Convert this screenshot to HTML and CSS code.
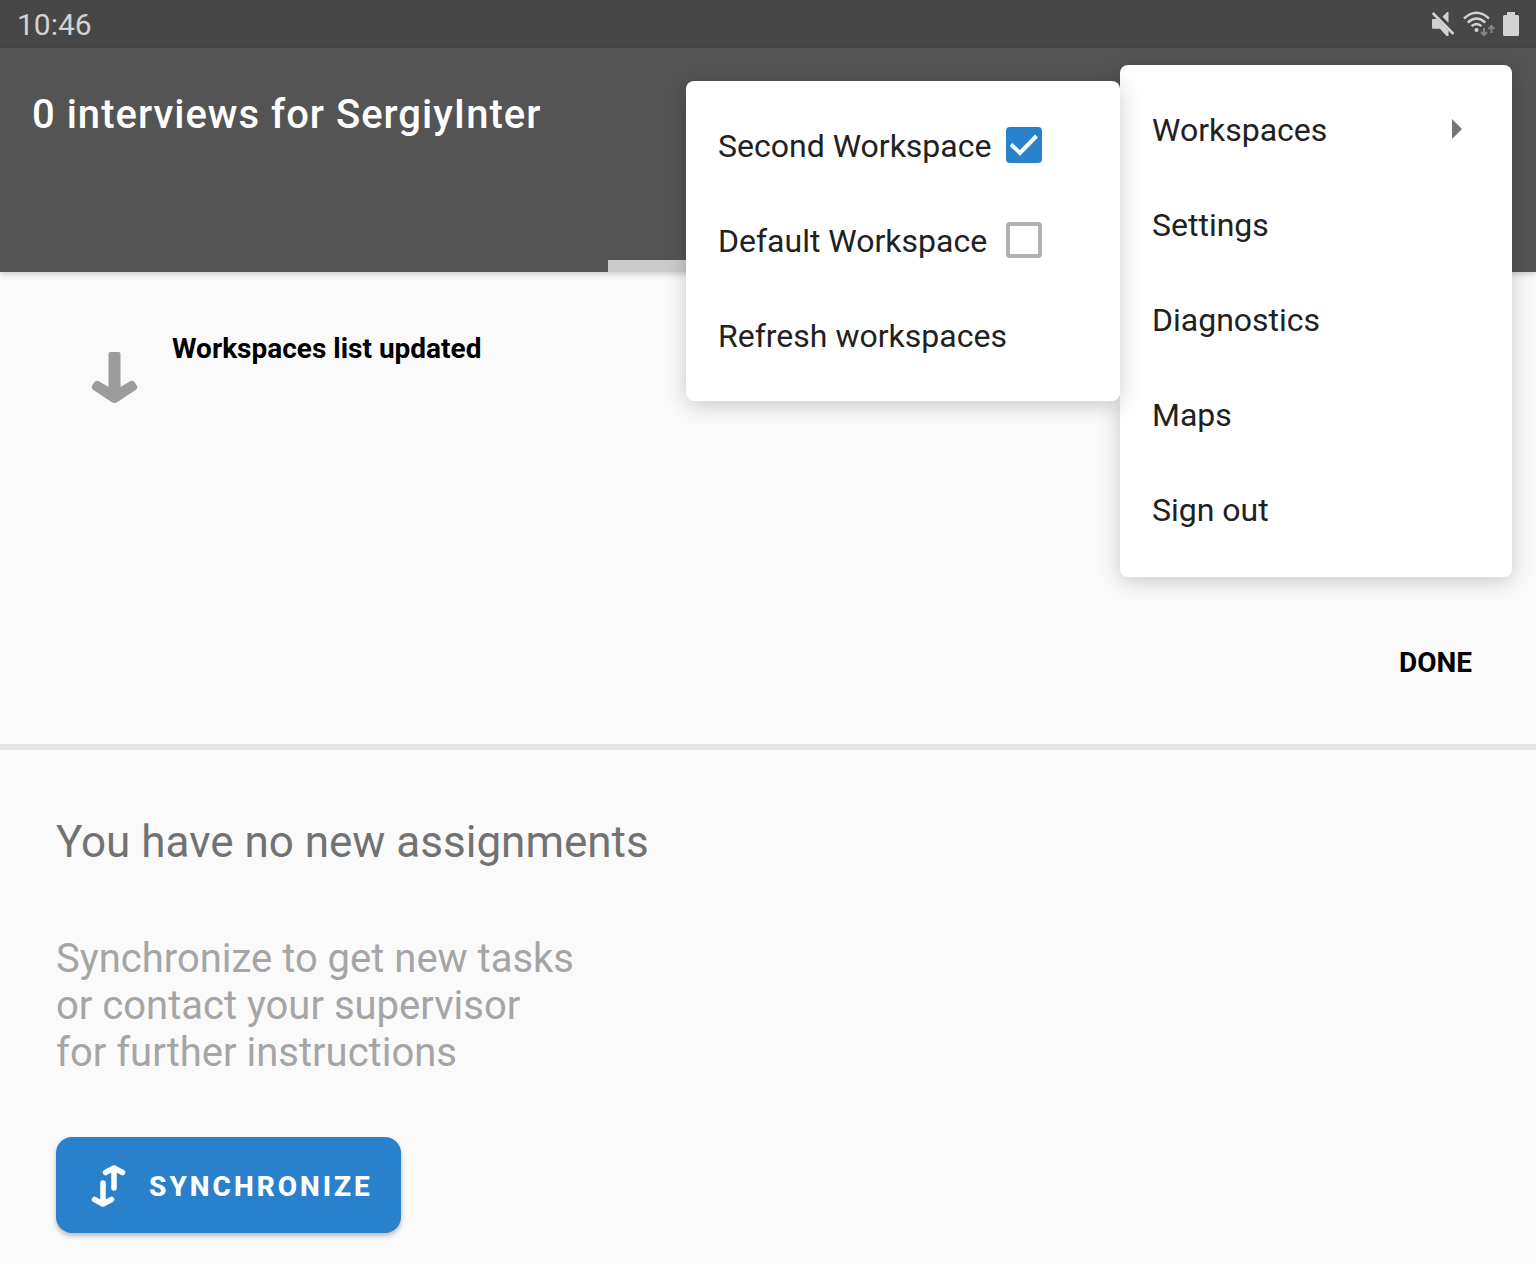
FILE: index.html
```html
<!DOCTYPE html>
<html lang="en">
<head>
<meta charset="utf-8">
<meta name="viewport" content="width=device-width, initial-scale=1">
<title>Interviews</title>
<link rel="stylesheet" href="styles.css">
</head>
<body>
<div class="status-bar">
  <time class="clock">10:46</time>
  <div class="status-icons">
    <svg class="icon-mute" width="24" height="26" viewBox="0 0 24 26" aria-hidden="true">
      <path d="M2 8h4L17.500 19.500V25h-2L9 17.700H2q-1 0-1-1V9q0-1 1-1z" fill="#d2d2d2"/>
      <path d="M11.500 5.800L16 1h1.500v11z" fill="#d2d2d2"/>
      <path d="M1.700 2L22.500 23" stroke="#d2d2d2" stroke-width="2.600"/>
    </svg>
    <svg class="icon-wifi" width="32" height="26" viewBox="0 0 32 26" aria-hidden="true">
      <g fill="none" stroke="#d2d2d2" stroke-width="2.400">
        <path d="M1 7.500Q13.500 -4 26 7.500"/>
        <path d="M4.700 11.500Q13.500 3.500 22.300 11.500"/>
        <path d="M8.500 15.200Q13.500 10.800 18.500 15.200"/>
      </g>
      <circle cx="13.500" cy="19" r="2" fill="#d2d2d2"/>
      <g fill="none" stroke="#858585" stroke-width="2">
        <path d="M21 17v7M18 21l3 3 3-3M28.500 22v-7M25.500 18l3-3 3 3"/>
      </g>
    </svg>
    <svg class="icon-battery" width="16" height="26" viewBox="0 0 16 26" aria-hidden="true">
      <path d="M4 1h8v3h2.500a1.500 1.500 0 0 1 1.500 1.500v18a1.500 1.500 0 0 1-1.500 1.500h-13A1.500 1.500 0 0 1 0 23.500V5.500a1.500 1.500 0 0 1 1.500-1.500H4z" fill="#d2d2d2"/>
    </svg>
  </div>
</div>

<header class="app-bar">
  <h1 class="app-title">0 interviews for SergiyInter</h1>
  <div class="tab-indicator"></div>
  <nav class="menu" aria-label="Options">
    <button class="menu-item" type="button" aria-expanded="true">Workspaces
      <svg width="10" height="20" viewBox="0 0 10 20" aria-hidden="true"><path d="M0 0l10 10L0 20z" fill="#757575"/></svg>
    </button>
    <button class="menu-item" type="button">Settings</button>
    <button class="menu-item" type="button">Diagnostics</button>
    <button class="menu-item" type="button">Maps</button>
    <button class="menu-item" type="button">Sign out</button>
    <div class="submenu">
      <label class="menu-item"><span class="menu-label">Second Workspace</span><input class="check" type="checkbox" checked></label>
      <label class="menu-item"><span class="menu-label">Default Workspace</span><input class="check" type="checkbox"></label>
      <button class="menu-item" type="button">Refresh workspaces</button>
    </div>
  </nav>
</header>

<main>
  <section class="sync-panel">
    <div class="sync-message">
      <svg width="48" height="54" viewBox="0 0 48 54" aria-hidden="true">
        <path d="M18.500 3q0-2 2-2h8q2 0 2 2v33l10-6q2-1 4 1l2 3q2 3-1 5L27.500 51q-3 2-6 0L3.500 39q-3-2-1-5l2-3q2-2 4-1l10 6z" fill="#9c9c9c"/>
      </svg>
      <h2 class="sync-title">Workspaces list updated</h2>
    </div>
    <button class="done" type="button">DONE</button>
  </section>
  <section class="empty">
    <h2 class="empty-title">You have no new assignments</h2>
    <p class="empty-text">Synchronize to get new tasks<br>or contact your supervisor<br>for further instructions</p>
    <button class="sync-button" type="button">
      <svg width="36" height="44" viewBox="0 0 36 44" aria-hidden="true">
        <g fill="none" stroke="#fff" stroke-width="5.500" stroke-linecap="round" stroke-linejoin="round">
          <path d="M23 24V4M14.500 8.500L23 4L31.500 8.500"/>
          <path d="M12 19V39M3.500 35.500L12 40L20.500 35.500"/>
        </g>
      </svg>
      <span>SYNCHRONIZE</span>
    </button>
  </section>
</main>
</body>
</html>
```

FILE: styles.css
```css
* {
  box-sizing: border-box;
}

body {
  margin: 0;
  min-height: 100vh;
  background: #fafafa;
  color: #000;
  font-family: Roboto, "Liberation Sans", sans-serif;
}

h1, h2, p {
  margin: 0;
}

button {
  border: 0;
  background: none;
  color: inherit;
  font: inherit;
  cursor: pointer;
}

svg {
  flex: none;
}

.status-bar {
  display: flex;
  align-items: center;
  justify-content: space-between;
  height: 48px;
  padding: 0 17px;
  background: #474747;
}

.clock {
  color: #d2d2d2;
  font-size: 30px;
  line-height: 48px;
  padding-top: 2px;
}

.status-icons {
  display: flex;
  gap: 8px;
}

.app-bar {
  position: relative;
  z-index: 1;
  display: flex;
  flex-direction: column;
  justify-content: space-between;
  height: 224px;
  padding: 43px 32px 0;
  background: #545454;
  box-shadow: 0 2px 6px rgba(0, 0, 0, 0.2);
}

.app-title {
  color: #fff;
  font-size: 40px;
  font-weight: 500;
  line-height: 48px;
  letter-spacing: 1px;
}

.tab-indicator {
  align-self: center;
  width: 320px;
  height: 12px;
  background: #cbcbcb;
}

.menu,
.submenu {
  position: absolute;
  border-radius: 8px;
  background: #fff;
  color: #212121;
  box-shadow: 0 4px 22px rgba(0, 0, 0, 0.2);
}

.menu {
  top: 17px;
  right: 24px;
  width: 392px;
  padding: 17px 0 20px;
}

.submenu {
  top: 16px;
  right: 100%;
  width: 434px;
  padding: 17px 0 18px;
}

.menu-item {
  display: flex;
  align-items: center;
  width: 100%;
  height: 95px;
  padding: 0 50px 0 32px;
  font-size: 32px;
  line-height: 40px;
  text-align: left;
}

.menu-item svg {
  margin: 0 0 2px auto;
}

.menu-label {
  width: 288px;
}

.check {
  appearance: none;
  flex: none;
  width: 36px;
  height: 36px;
  margin: 0 0 2px;
  border: 4px solid #b1b1b1;
  border-radius: 4px;
}

.check:checked {
  border-color: #2a81cb;
  background: #2a81cb url("data:image/svg+xml,%3Csvg xmlns='http://www.w3.org/2000/svg' viewBox='0 0 28 28'%3E%3Cpath d='M1 13.500l9 8.500L26.500 5' fill='none' stroke='white' stroke-width='4'/%3E%3C/svg%3E") center / 28px 28px no-repeat;
}

.sync-panel {
  display: flex;
  flex-direction: column;
  justify-content: space-between;
  align-items: flex-start;
  height: 478px;
  padding: 61px 64px 65px 90px;
  border-bottom: 6px solid #e5e5e5;
}

.sync-message {
  display: flex;
  gap: 34px;
}

.sync-message svg {
  margin-top: 18px;
}

.sync-title,
.done {
  font-size: 28px;
  font-weight: 700;
  line-height: 32px;
}

.done {
  align-self: flex-end;
  padding: 0;
}

.empty {
  padding: 64px 56px 31px;
}

.empty-title {
  color: #727272;
  font-size: 44px;
  font-weight: 400;
  line-height: 56px;
}

.empty-text {
  margin-top: 65px;
  color: #a5a5a5;
  font-size: 40px;
  line-height: 47px;
}

.sync-button {
  display: flex;
  align-items: center;
  gap: 22px;
  height: 96px;
  margin-top: 61px;
  padding: 2px 28px 0 35px;
  border-radius: 16px;
  background: #2a81cb;
  box-shadow: 0 3px 5px rgba(0, 0, 0, 0.25);
  color: #fff;
  font-size: 28px;
  font-weight: 800;
  letter-spacing: 3px;
}
```
